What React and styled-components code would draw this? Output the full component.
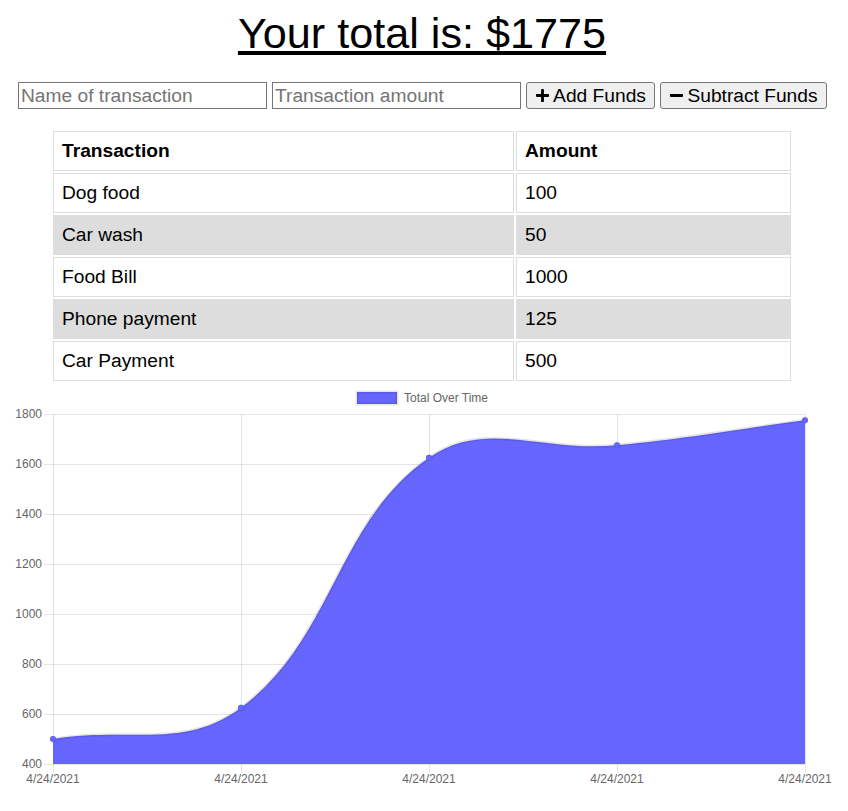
import React from "react";
import styled, { createGlobalStyle } from "styled-components";
import { FaPlus, FaMinus } from "react-icons/fa";

const GlobalStyle = createGlobalStyle`
  body {
    margin: 8px;
    background: #fff;
    font-family: "Liberation Sans", Arial, sans-serif;
    color: #000;
  }
`;

const Title = styled.h1`
  margin: 0 4px 0 0;
  text-align: center;
  font-size: 43.2px;
  line-height: 50px;
  font-weight: 400;
  text-decoration: underline;
`;

const Form = styled.div`
  display: flex;
  margin: 24px 0 0 10px;
  gap: 5px;
  height: 27px;
`;

const Input = styled.input`
  box-sizing: border-box;
  width: 249px;
  height: 27px;
  padding: 1px 2px;
  border: 1px solid #767676;
  border-radius: 0;
  font-family: "Liberation Sans", Arial, sans-serif;
  font-size: 19.2px;
  color: #000;
  &::placeholder {
    color: #757575;
  }
`;

const Button = styled.button`
  box-sizing: border-box;
  width: ${(p) => p.$w}px;
  height: 27px;
  display: inline-flex;
  align-items: center;
  justify-content: center;
  gap: 3px;
  padding: 1px 5px;
  border: 1px solid #767676;
  border-radius: 3px;
  background: #efefef;
  font-family: "Liberation Sans", Arial, sans-serif;
  font-size: 19.2px;
  color: #000;
  svg {
    width: 15px;
    height: 15px;
  }
`;

const Table = styled.table`
  margin: 20px 0 0 43px;
  width: 742px;
  border-collapse: separate;
  border-spacing: 2px;
`;

const Cell = styled.td`
  box-sizing: border-box;
  height: 40px;
  padding: 8px;
  border: 1px solid #dddddd;
  font-size: 19.2px;
  line-height: 22px;
  text-align: left;
  font-weight: ${(p) => (p.$head ? 700 : 400)};
  width: ${(p) => (p.$first ? "461px" : "auto")};
`;

const Row = styled.tr`
  background: ${(p) => (p.$shade ? "#dddddd" : "#ffffff")};
`;

const ChartSvg = styled.svg`
  display: block;
  margin-top: 0;
  font-family: "Liberation Sans", Arial, sans-serif;
`;

const rows = [
  ["Dog food", "100"],
  ["Car wash", "50"],
  ["Food Bill", "1000"],
  ["Phone payment", "125"],
  ["Car Payment", "500"],
];

const values = [500, 625, 1625, 1675, 1775];

function Chart() {
  const W = 832;
  const H = 416;
  const left = 45;
  const right = 797;
  const top = 31;
  const bottom = 381;
  const yMin = 400;
  const yMax = 1800;
  const yOf = (v) => bottom - ((v - yMin) / (yMax - yMin)) * (bottom - top);
  const xs = values.map((_, i) => left + (i * (right - left)) / (values.length - 1));
  const pts = values.map((v, i) => ({ x: xs[i], y: yOf(v) }));

  const t = 0.4;
  const cps = pts.map((cur, i) => {
    const prev = pts[i - 1] || cur;
    const next = pts[i + 1] || cur;
    const d01 = Math.hypot(cur.x - prev.x, cur.y - prev.y);
    const d12 = Math.hypot(next.x - cur.x, next.y - cur.y);
    let s01 = d01 / (d01 + d12);
    let s12 = d12 / (d01 + d12);
    if (isNaN(s01)) s01 = 0;
    if (isNaN(s12)) s12 = 0;
    const fa = t * s01;
    const fb = t * s12;
    const clampY = (y) => Math.max(top, Math.min(bottom, y));
    return {
      prev: { x: cur.x - fa * (next.x - prev.x), y: clampY(cur.y - fa * (next.y - prev.y)) },
      next: { x: cur.x + fb * (next.x - prev.x), y: clampY(cur.y + fb * (next.y - prev.y)) },
    };
  });

  let line = `M${pts[0].x},${pts[0].y}`;
  for (let i = 1; i < pts.length; i++) {
    const a = cps[i - 1].next;
    const b = cps[i].prev;
    line += ` C${a.x},${a.y} ${b.x},${b.y} ${pts[i].x},${pts[i].y}`;
  }
  const area = `${line} L${right},${bottom} L${left},${bottom} Z`;

  const yTicks = [1800, 1600, 1400, 1200, 1000, 800, 600, 400];
  const grid = "rgba(0,0,0,0.1)";

  return (
    <ChartSvg width={W} height={H} viewBox={`0 0 ${W} ${H}`}>
      <rect x={349} y={9} width={40} height={12} fill="#6666ff" stroke={grid} strokeWidth={3} />
      <text x={396} y={19} fontSize="12" fill="#666">Total Over Time</text>

      {yTicks.map((v) => (
        <g key={v}>
          <line x1={left - 9} x2={right} y1={yOf(v) + 0.5} y2={yOf(v) + 0.5} stroke={grid} strokeWidth={1} />
          <text x={34} y={yOf(v) + 4} fontSize="12" fill="#666" textAnchor="end">{v}</text>
        </g>
      ))}
      {xs.map((x, i) => (
        <g key={i}>
          <line x1={x + 0.5} x2={x + 0.5} y1={top} y2={bottom + 9} stroke={grid} strokeWidth={1} />
          <text x={x} y={400} fontSize="12" fill="#666" textAnchor="middle">4/24/2021</text>
        </g>
      ))}

      <path d={area} fill="#6666ff" />
      <path d={line} fill="none" stroke={grid} strokeWidth={3} />
      {pts.map((p, i) => (
        <circle key={i} cx={p.x} cy={p.y} r={3} fill="#6666ff" stroke={grid} strokeWidth={1} />
      ))}
    </ChartSvg>
  );
}

export default function App() {
  return (
    <>
      <GlobalStyle />
      <Title>Your total is: $1775</Title>
      <Form>
        <Input type="text" placeholder="Name of transaction" />
        <Input type="number" placeholder="Transaction amount" />
        <Button $w={129}>
          <FaPlus />
          Add Funds
        </Button>
        <Button $w={167}>
          <FaMinus />
          Subtract Funds
        </Button>
      </Form>
      <Table>
        <thead>
          <Row>
            <Cell as="th" $head $first>Transaction</Cell>
            <Cell as="th" $head>Amount</Cell>
          </Row>
        </thead>
        <tbody>
          {rows.map(([name, amt], i) => (
            <Row key={name} $shade={i % 2 === 1}>
              <Cell $first>{name}</Cell>
              <Cell>{amt}</Cell>
            </Row>
          ))}
        </tbody>
      </Table>
      <Chart />
    </>
  );
}
